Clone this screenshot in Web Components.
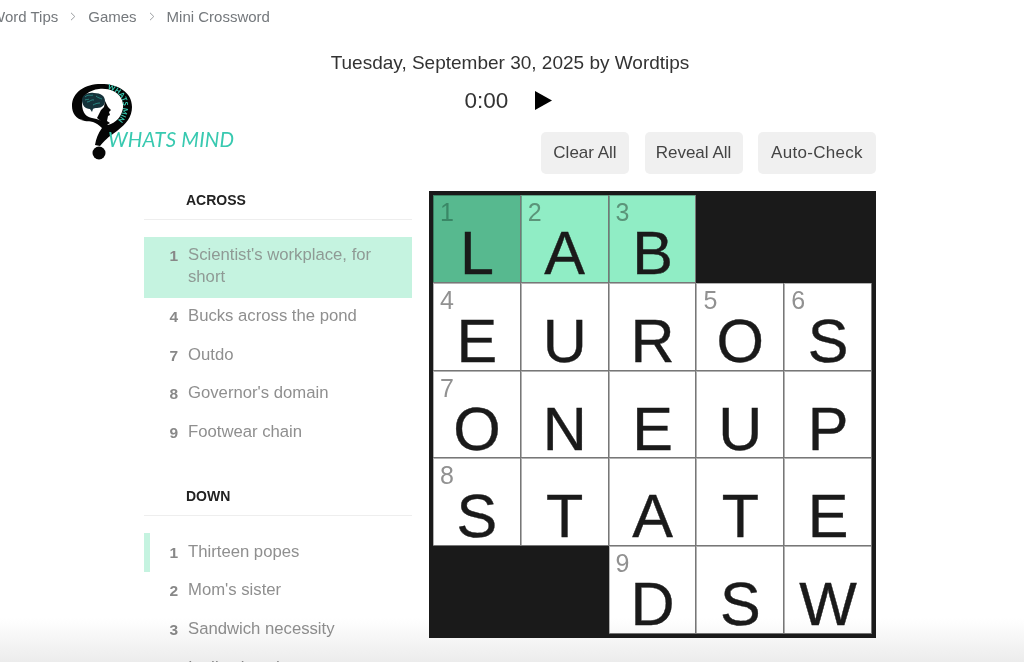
<!DOCTYPE html>
<html>
<head>
<meta charset="utf-8">
<title>Mini Crossword</title>
<style>
  html, body { margin: 0; height: 100%; overflow: hidden; background: #fff; }
  body { font-family: "Liberation Sans", Arial, sans-serif; }
</style>
</head>
<body>
<crossword-page></crossword-page>

<script>
class BreadCrumbs extends HTMLElement {
  constructor() {
    super();
    this.shadowDOM = this.attachShadow({ mode: 'open' });
  }

  connectedCallback() {
    this.shadowDOM.innerHTML = `
    <style>
    :host { display: flex; align-items: center; height: 32px; margin-left: -9px; color: #74787c; font-size: 15px; white-space: nowrap; }
    svg { width: 6px; height: 9px; margin: 1px 12px 0; fill: none; stroke: #9a9da0; stroke-width: 1; }
    </style>
    <span>Word Tips</span>
    <svg viewBox="0 0 6 9"><path d="M1 .8 4.8 4.500 1 8.200"/></svg>
    <span>Games</span>
    <svg viewBox="0 0 6 9"><path d="M1 .8 4.8 4.500 1 8.200"/></svg>
    <span>Mini Crossword</span>
    `;
  }
}

class SiteLogo extends HTMLElement {
  constructor() {
    super();
    this.shadowDOM = this.attachShadow({ mode: 'open' });
  }

  connectedCallback() {
    // question mark with a head and brain inside, coords are page px minus (70,82)
    this.shadowDOM.innerHTML = `
    <style>
    :host { position: absolute; left: 70px; top: 82px; display: block; width: 170px; height: 80px; }
    svg { display: block; width: 170px; height: 80px; overflow: visible; }
    text { font-family: Lato, sans-serif; fill: #38c9b0; }
    </style>
    <svg viewBox="0 0 170 80">
      <path fill="#050505" d="M13 38C6 37 2 31 2 24 2 10 15 2 31 2c17 0 31 8 31 23 0 10-6 17-15 24-9 6-13 10-17 15l-5-1c1-6 3-12 7-17-3-3-6-5-9-6-3-1-6 0-12-2Z"/>
      <circle cx="29" cy="71" r="6.500" fill="#050505"/>
      <path fill="#fff" d="M12 21C12 14 19 8 29 7c9-1 18 2 22 9 4 7 2 15-3 21-3 3-6 5-10 6-4-4-10-6-16-7-5-1-10-4-10-15Z"/>
      <path fill="#15323a" d="M12 18c0-5 6-8 12-7 7 0 11 3 11 8 0 4-3 7-8 7-2 0-3 0-4 1l-1 3-2-3c-5 0-8-4-8-9Z"/>
      <path fill="none" stroke="#2fa9a0" stroke-width=".7" d="M15 15c3-3 6-1 8-2m-6 7c3 0 4-3 7-2m2-4c2 2 4 2 6 3m-9 6c2-1 4-2 7-2m-15-3c2-1 3 0 4-1"/>
      <path fill="#050505" d="M35 19l3 6 3 3-2 2 1 3-2 1-1 5 3 2-5 3c-2-3-5-6-8-8l4-8 3-3Z"/>
      <path id="arc" fill="none" d="M37 7C47 9 54 16 53 25c0 5-2 10-6 14"/>
      <text font-size="7" font-weight="900"><textPath href="#arc">WHATS MIND</textPath></text>
      <text x="38" y="65" font-size="20.500" font-style="italic" letter-spacing=".2">WHATS MIND</text>
    </svg>
    `;
  }
}

class GameHeader extends HTMLElement {
  constructor() {
    super();
    this.shadowDOM = this.attachShadow({ mode: 'open' });
  }

  connectedCallback() {
    this.shadowDOM.innerHTML = `
    <style>
    :host { display: flex; flex-direction: column; align-items: center; color: #333; }
    .title { font-size: 19px; line-height: 24px; margin: 19px 4px 0 0; }
    .timer { display: flex; align-items: center; gap: 26px; margin: 12px 7px 0 0; height: 27px; font-size: 22.500px; }
    svg { width: 18px; height: 19px; }
    </style>
    <div class="title">Tuesday, September 30, 2025 by Wordtips</div>
    <div class="timer">
      <span>0:00</span>
      <svg viewBox="0 0 18 19"><path fill="#000" d="M1 0 18 9.500 1 19Z"/></svg>
    </div>
    `;
  }
}

class ToolBar extends HTMLElement {
  constructor() {
    super();
    this.shadowDOM = this.attachShadow({ mode: 'open' });
  }

  connectedCallback() {
    this.shadowDOM.innerHTML = `
    <style>
    :host { display: flex; justify-content: flex-end; gap: 15.500px; margin: 18px 148px 0 0; }
    button { height: 42px; padding: 0; border: 0; border-radius: 5px; background: #f0f0f0; color: #444; font: 17px "Liberation Sans", Arial, sans-serif; }
    .clear { width: 88px; }
    .reveal { width: 98px; }
    .check { width: 118px; letter-spacing: .3px; }
    </style>
    <button class="clear">Clear All</button>
    <button class="reveal">Reveal All</button>
    <button class="check">Auto-Check</button>
    `;
  }
}

class ClueItem extends HTMLElement {
  constructor() {
    super();
    this.shadowDOM = this.attachShadow({ mode: 'open' });
  }

  connectedCallback() {
    this.shadowDOM.innerHTML = `
    <style>
    :host { display: flex; padding: 8.35px 12px 8.35px 0; line-height: 22px; font-size: 16.700px; color: #8f8f8f; }
    :host([mode="active"]) { background: #c5f3e0; color: #8f9a95; }
    :host([mode="cross"]) { box-shadow: inset 6px 0 0 #c5f3e0; }
    b { flex: none; width: 44px; padding-right: 10px; box-sizing: border-box; text-align: right; font-size: 15.500px; color: #888; }
    span { position: relative; top: -1px; }
    </style>
    <b>${this.getAttribute('num')}</b><span><slot></slot></span>
    `;
  }
}

class ClueList extends HTMLElement {
  constructor() {
    super();
    this.shadowDOM = this.attachShadow({ mode: 'open' });
  }

  connectedCallback() {
    this.shadowDOM.innerHTML = `
    <style>
    :host { display: block; }
    h3 { margin: 0 0 17px; height: 28px; padding-left: 42px; border-bottom: 1px solid #eee; color: #222; font-size: 14px; line-height: 18px; }
    </style>
    <h3>${this.getAttribute('heading')}</h3>
    <slot></slot>
    `;
  }
}

const cells = [
  ['L1', 'A2', 'B3', '', ''],
  ['E4', 'U', 'R', 'O5', 'S6'],
  ['O7', 'N', 'E', 'U', 'P'],
  ['S8', 'T', 'A', 'T', 'E'],
  ['', '', 'D9', 'S', 'W'],
];

class CrossGrid extends HTMLElement {
  constructor() {
    super();
    this.shadowDOM = this.attachShadow({ mode: 'open' });
  }

  connectedCallback() {
    const html = cells.map((row, r) => row.map((c, i) => {
      if (!c) return '<div class="cell block"></div>';
      let cls = 'cell';
      if (r === 0) cls += i === 0 ? ' focus' : ' word';
      const num = c.length > 1 ? `<i>${c[1]}</i>` : '';
      return `<div class="${cls}">${num}<span>${c[0]}</span></div>`;
    }).join('')).join('');
    this.shadowDOM.innerHTML = `
    <style>
    :host { display: block; box-sizing: border-box; width: 447px; height: 447px; padding: 4px; background: #1a1a1a; }
    .grid { display: grid; grid-template-columns: repeat(5, 1fr); grid-template-rows: repeat(5, 1fr); width: 439px; height: 439px; }
    .cell { position: relative; background: #fff; box-shadow: inset -1px -1px 0 #777, inset 1px 1px 0 rgba(0,0,0,.3); color: #1a1a1a; }
    .word { background: #90edc5; }
    .focus { background: #57b98f; }
    .block { background: #1a1a1a; box-shadow: none; }
    i { position: absolute; left: 7px; top: 2px; font-style: normal; font-size: 25px; line-height: 30px; color: #919191; }
    .word i { color: #5b9479; }
    .focus i { color: #3a8766; }
    span { position: absolute; left: 0; right: 0; top: 28px; text-align: center; font-size: 61px; line-height: 60px; -webkit-text-stroke: .4px #1a1a1a; }
    </style>
    <div class="grid">${html}</div>
    `;
  }
}

class CrosswordPage extends HTMLElement {
  constructor() {
    super();
    this.shadowDOM = this.attachShadow({ mode: 'open' });
  }

  connectedCallback() {
    this.shadowDOM.innerHTML = `
    <style>
    :host { display: block; position: relative; height: 662px; overflow: hidden; }
    .board { display: flex; align-items: flex-start; gap: 17px; margin: 17px 0 0 144px; }
    .clues { width: 268px; flex: none; }
    clue-list + clue-list { margin-top: 35px; }
    .fade { position: absolute; left: 0; right: 0; bottom: 0; height: 44px; background: linear-gradient(#fff, #ececec); mix-blend-mode: multiply; pointer-events: none; }
    </style>
    <bread-crumbs></bread-crumbs>
    <site-logo></site-logo>
    <game-header></game-header>
    <tool-bar></tool-bar>
    <div class="board">
      <div class="clues">
        <clue-list heading="ACROSS">
          <clue-item num="1" mode="active">Scientist's workplace, for short</clue-item>
          <clue-item num="4">Bucks across the pond</clue-item>
          <clue-item num="7">Outdo</clue-item>
          <clue-item num="8">Governor's domain</clue-item>
          <clue-item num="9">Footwear chain</clue-item>
        </clue-list>
        <clue-list heading="DOWN">
          <clue-item num="1" mode="cross">Thirteen popes</clue-item>
          <clue-item num="2">Mom's sister</clue-item>
          <clue-item num="3">Sandwich necessity</clue-item>
          <clue-item num="5">Is dismissed</clue-item>
        </clue-list>
      </div>
      <cross-grid></cross-grid>
    </div>
    <div class="fade"></div>
    `;
  }
}

customElements.define('bread-crumbs', BreadCrumbs);
customElements.define('site-logo', SiteLogo);
customElements.define('game-header', GameHeader);
customElements.define('tool-bar', ToolBar);
customElements.define('clue-item', ClueItem);
customElements.define('clue-list', ClueList);
customElements.define('cross-grid', CrossGrid);
customElements.define('crossword-page', CrosswordPage);
</script>
</body>
</html>
